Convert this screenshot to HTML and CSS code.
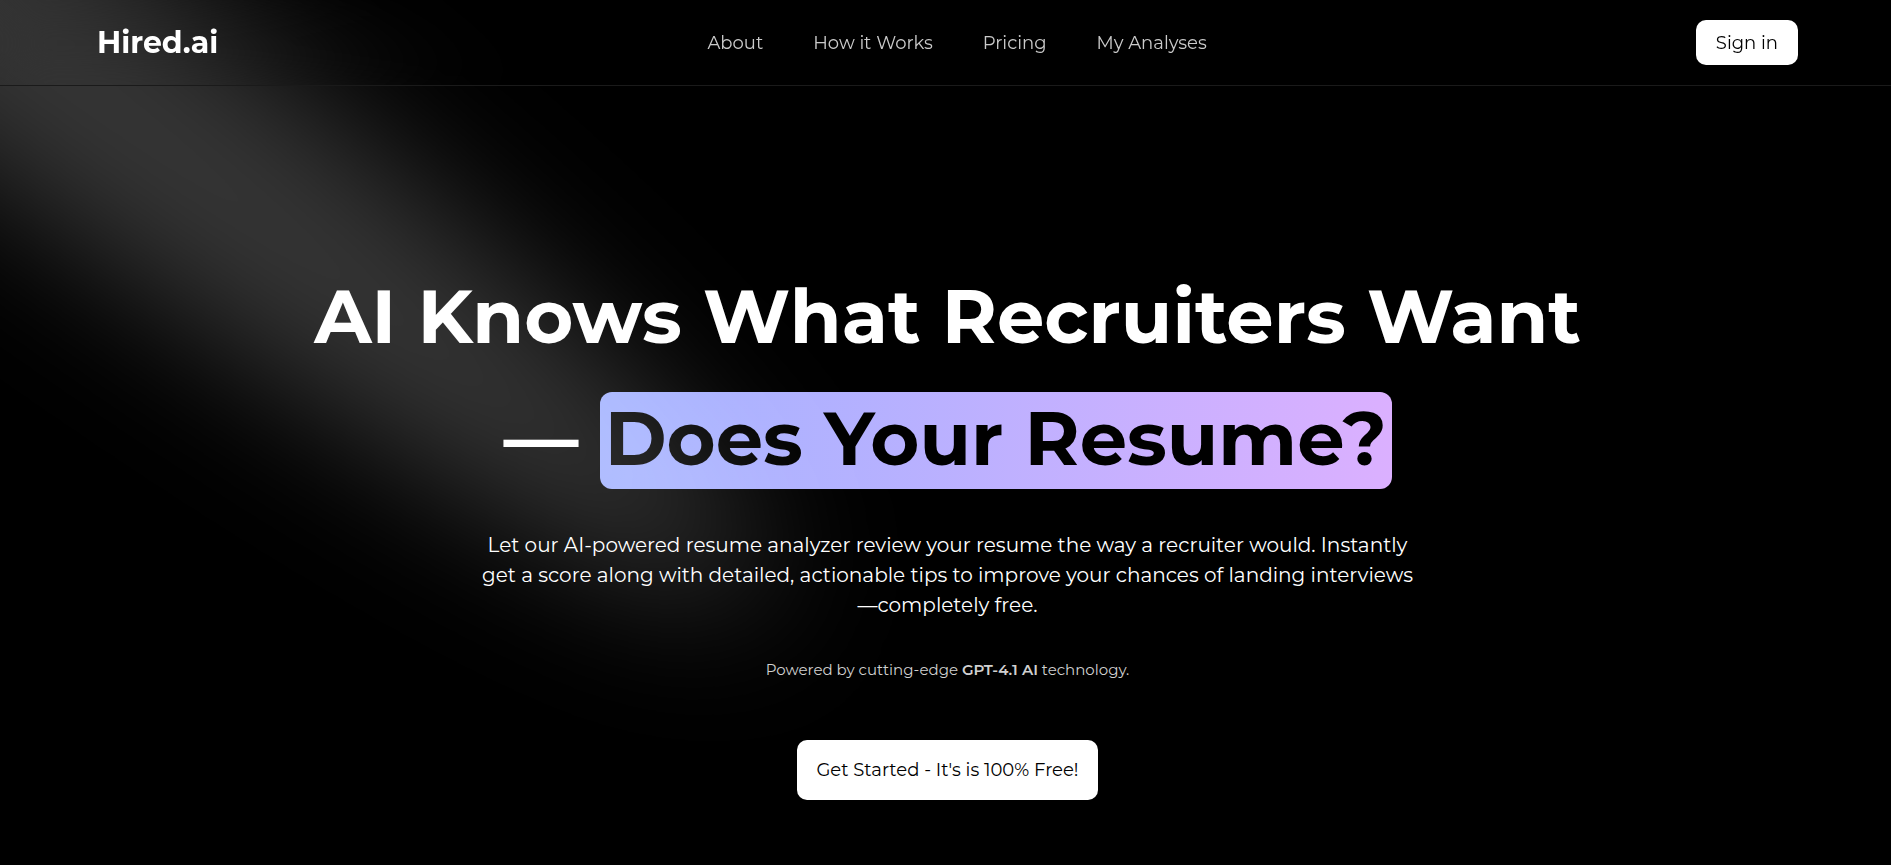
FILE: index.html
```html
<!DOCTYPE html>
<html lang="en">
<head>
<meta charset="utf-8">
<meta name="viewport" content="width=device-width, initial-scale=1">
<title>Hired.ai</title>
<link rel="stylesheet" href="styles.css">
</head>
<body>
<div class="page">
  <header class="header">
    <a class="logo" href="#">Hired.ai</a>
    <nav class="nav">
      <a href="#about">About</a>
      <a href="#how">How it Works</a>
      <a href="#pricing">Pricing</a>
      <a href="#analyses">My Analyses</a>
    </nav>
    <button class="btn btn-small" type="button">Sign in</button>
  </header>
  <main class="hero">
    <h1 class="title">AI Knows What Recruiters Want<br>— <span class="mark">Does Your Resume?</span></h1>
    <p class="lead">Let our AI-powered resume analyzer review your resume the way a recruiter would. Instantly<br>get a score along with detailed, actionable tips to improve your chances of landing interviews<br>—completely free.</p>
    <p class="note">Powered by cutting-edge <strong>GPT-4.1 AI</strong> technology.</p>
    <button class="btn btn-large" type="button">Get Started - It's is 100% Free!</button>
  </main>
  <svg class="spotlight" viewBox="0 0 3787 2842" fill="none" aria-hidden="true">
    <defs>
      <filter id="glow" x="0" y="0" width="3787" height="2842" filterUnits="userSpaceOnUse" color-interpolation-filters="sRGB">
        <feGaussianBlur stdDeviation="151"/>
      </filter>
    </defs>
    <g filter="url(#glow)">
      <ellipse cx="1924.71" cy="273.501" rx="1924.71" ry="273.501" transform="matrix(-0.822377 -0.568943 -0.568943 0.822377 3631.88 2291.09)" fill="#fff" fill-opacity="0.21"/>
    </g>
  </svg>
</div>
</body>
</html>
```
FILE: styles.css
```css
* {
  box-sizing: border-box;
}

body {
  margin: 0;
  background: #000;
  color: #fff;
  font-family: Montserrat, Inter, sans-serif;
}

.page {
  position: relative;
  min-height: 100vh;
  overflow: hidden;
}

.header {
  position: relative;
  z-index: 2;
  display: flex;
  align-items: center;
  justify-content: space-between;
  padding: 20px 93px 20px 97px;
  border-bottom: 1px solid #1a1a1a;
  backdrop-filter: blur(24px);
}

.logo {
  color: #fff;
  font-size: 30px;
  font-weight: 700;
  line-height: 40px;
  text-decoration: none;
}

.nav {
  display: flex;
  gap: 50px;
}

.nav a {
  color: #cacaca;
  font-size: 18px;
  line-height: 24px;
  text-decoration: none;
}

.btn {
  border: 0;
  background: #fff;
  color: #000;
  font-family: inherit;
  font-size: 18px;
  font-weight: 400;
  line-height: 24px;
  cursor: pointer;
}

.btn-small {
  padding: 11px 20px 10px;
  border-radius: 10px;
}

.btn-large {
  margin-top: 58px;
  padding: 18px 19px;
  border-radius: 10px;
}

.hero {
  display: flex;
  flex-direction: column;
  align-items: center;
  padding: 169px 22px 64px 26px;
  text-align: center;
}

.title {
  margin: 0;
  font-size: 75px;
  font-weight: 700;
  line-height: 122px;
}

.mark {
  padding: 0 5px 5px;
  border-radius: 12px;
  background: linear-gradient(90deg, #a1b1ff, #dbb0ff);
  color: #000;
}

.lead {
  margin: 31px 0 0;
  font-size: 20px;
  line-height: 30px;
}

.note {
  margin: 38px 0 0;
  color: #d0d0d0;
  font-size: 15px;
  line-height: 24px;
}

.note strong {
  font-weight: 600;
}

.spotlight {
  position: absolute;
  z-index: 1;
  top: -104px;
  left: 24px;
  width: 96%;
  height: 169%;
  transform: translate(-50%, -40%) rotate(2deg);
  pointer-events: none;
}
```
